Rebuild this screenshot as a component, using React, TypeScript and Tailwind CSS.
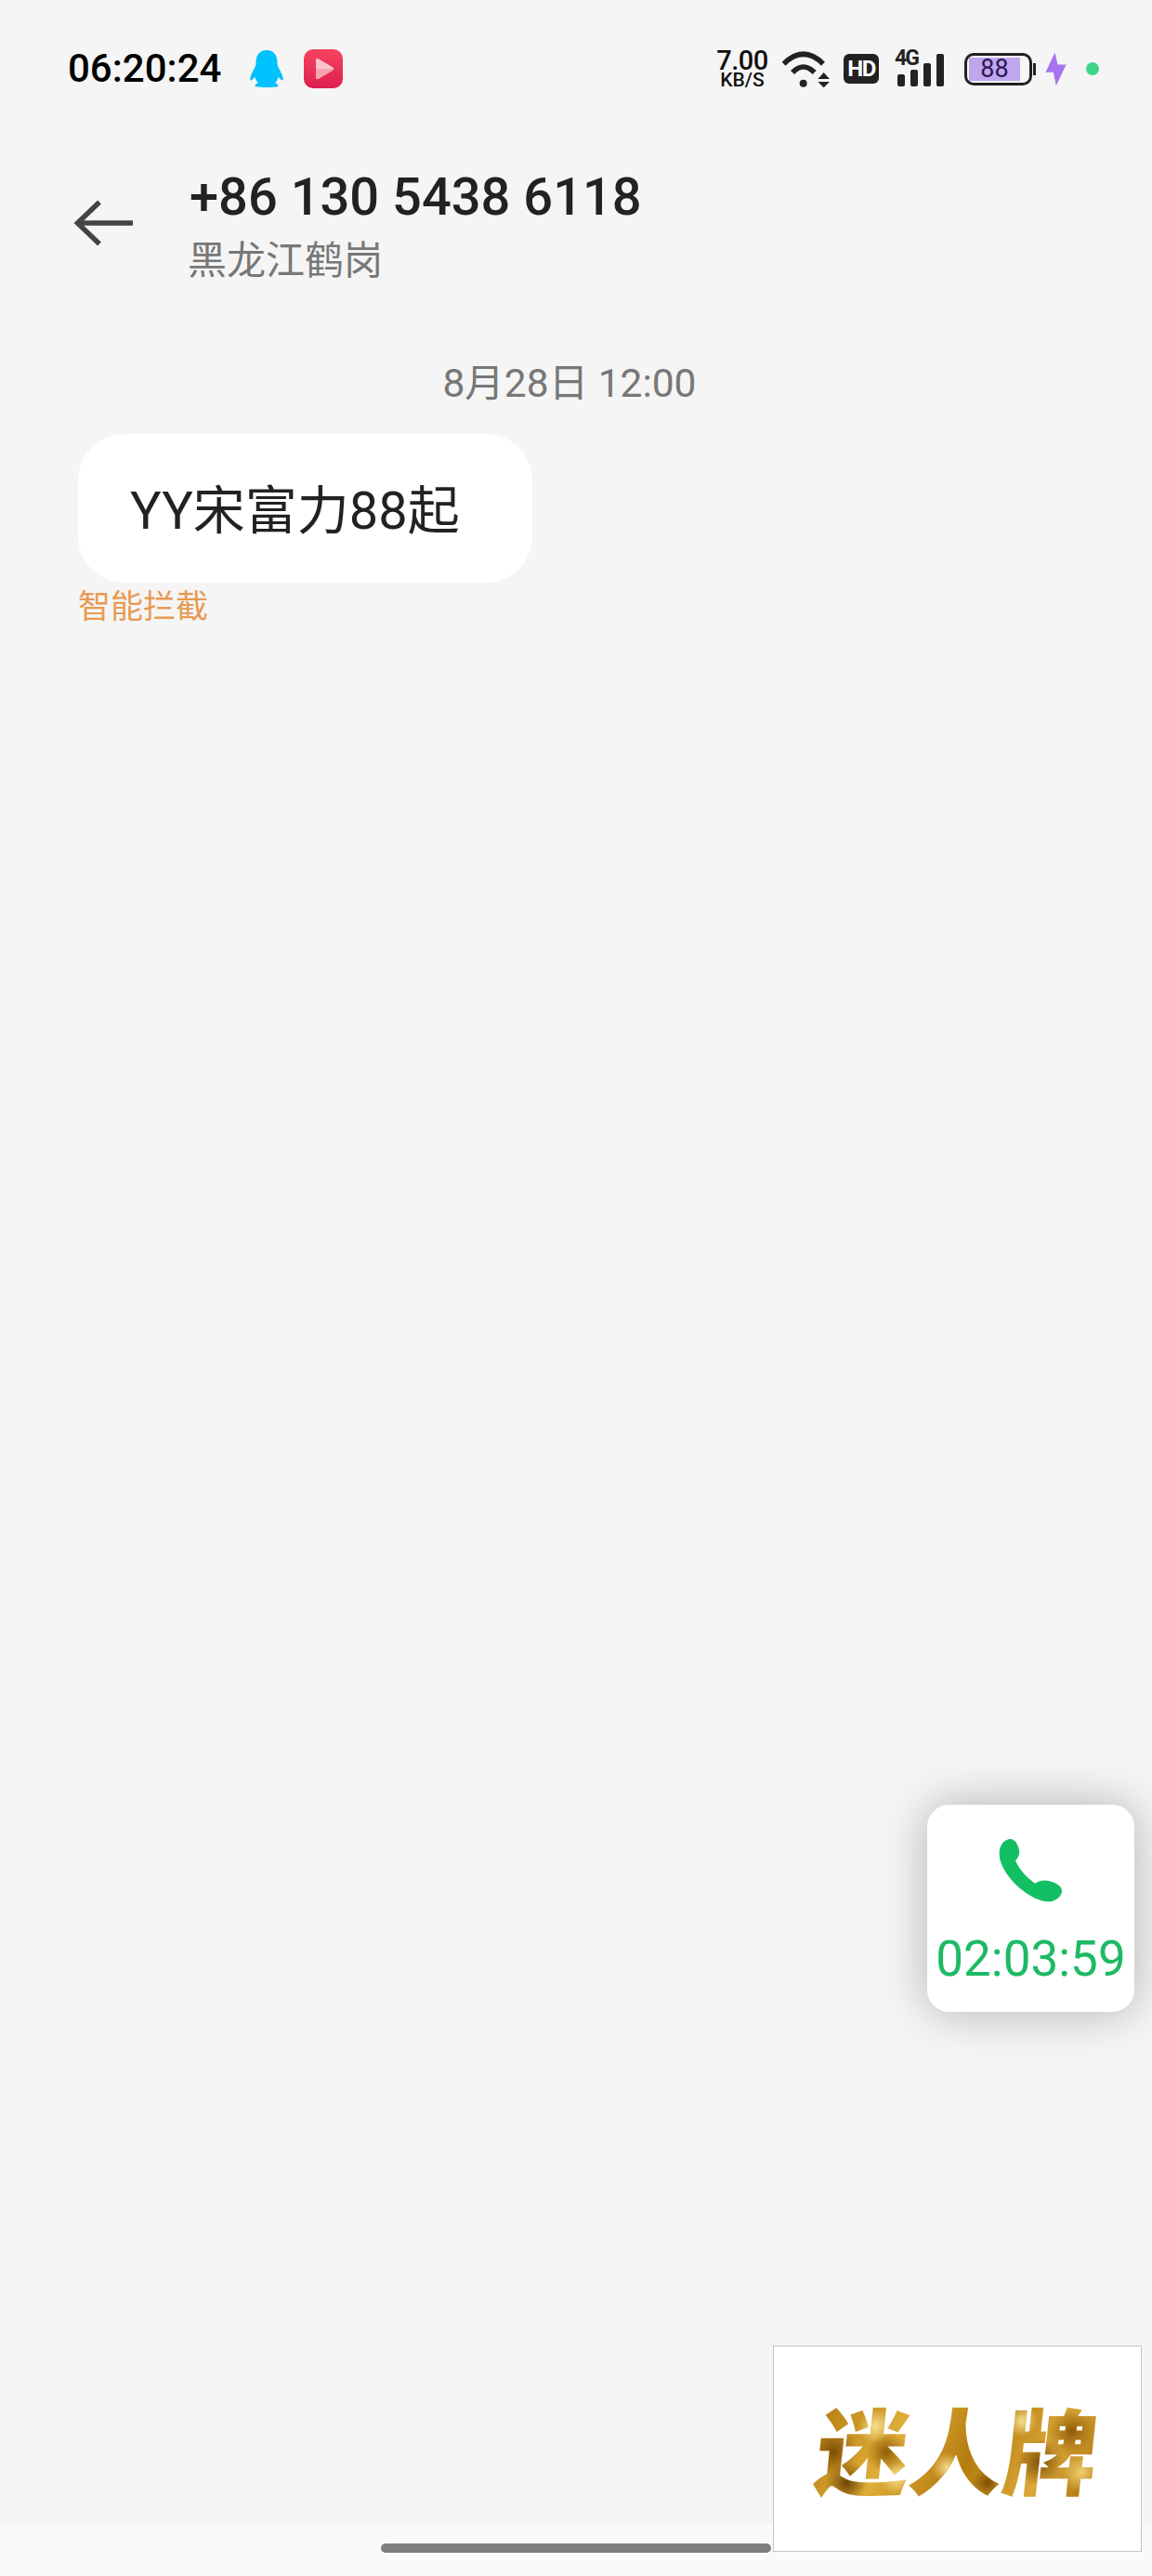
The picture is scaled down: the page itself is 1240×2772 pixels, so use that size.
import React from "react";

const ROBOTO = "font-['Roboto','Noto_Sans_CJK_SC',sans-serif]";

function Penguin() {
  return (
    <svg width="36" height="40" viewBox="0 0 36 40" className="ml-[31px]">
      <path
        fill="#00c2ff"
        d="M18 0C10 0 6.5 6 6.5 13c0 2-.3 3.6-1 5.3C3.2 22.5.6 27 .2 31c-.1 1.4.6 1.8 1.6 1.2 1.2-.7 2.6-2.2 3.4-3.4.8 2.600 2 4.800 3.800 6.500C7.500 36 5.400 37 5.600 38.600 5.800 39.700 8 40 18 40s12.200-.3 12.400-1.400c.2-1.600-1.900-2.600-3.400-3.300 1.800-1.700 3-3.900 3.800-6.500.8 1.200 2.200 2.700 3.400 3.400 1 .6 1.700.2 1.600-1.200-.4-4-3-8.500-5.300-12.700-.7-1.700-1-3.300-1-5.300C29.500 6 26 0 18 0z"
      />
    </svg>
  );
}

function RedApp() {
  return (
    <svg width="42" height="42" viewBox="0 0 42 42" className="ml-[22px]">
      <defs>
        <linearGradient id="redg" x1="0" y1="0" x2="0" y2="1">
          <stop offset="0" stopColor="#f6445f" />
          <stop offset="1" stopColor="#dd1f50" />
        </linearGradient>
      </defs>
      <rect width="42" height="42" rx="10" fill="url(#redg)" />
      <path d="M13 11.500c0-1.300 1.300-2 2.400-1.400l16 9.500c1.100.7 1.100 2.200 0 2.800l-16 9.500c-1.100.6-2.400-.1-2.400-1.400z" fill="#fbc4cf" />
      <path d="M13 21h19.200c0 .6-.3 1.100-.8 1.400l-16 9.500c-1.100.6-2.400-.1-2.400-1.400z" fill="#f7a3b4" />
    </svg>
  );
}

function Wifi() {
  return (
    <svg width="53" height="41" viewBox="278 68 159 123" className="ml-[14px]">
      <path d="M286 112 Q349 50 413 112" fill="none" stroke="#222" strokeWidth="17" />
      <path d="M314 140 Q349 104 385 140" fill="none" stroke="#222" strokeWidth="17" />
      <circle cx="349" cy="175" r="12" fill="#222" />
      <path d="M396 161 L415 140 L434 161 Z" fill="#222" />
      <path d="M396 170 L434 170 L415 189 Z" fill="#222" />
    </svg>
  );
}

function Signal() {
  return (
    <div className="relative ml-[19px] h-[37px] w-[54px]">
      <span className="absolute left-[-2px] top-[-5px] font-['Roboto',sans-serif] text-[23px] font-bold leading-[24px] tracking-[-2px] text-[#222]">
        4G
      </span>
      <svg width="54" height="37" viewBox="0 0 54 37" className="block">
        <rect x="1" y="24" width="8" height="13" rx="2" fill="#222" />
        <rect x="15" y="19" width="8" height="18" rx="2" fill="#222" />
        <rect x="29" y="12" width="8" height="25" rx="2" fill="#222" />
        <rect x="43" y="2" width="8" height="35" rx="2" fill="#222" />
      </svg>
    </div>
  );
}

function Battery() {
  return (
    <div className="ml-[19px] flex items-center">
      <div className="flex h-[35px] w-[73px] items-center rounded-[10px] border-[3px] border-[#222] pl-[2px]">
        <div className="flex h-[25px] w-[55px] items-center justify-center bg-[#c0a6ef] font-['Roboto',sans-serif] text-[27px] leading-none text-[#2a1650]">
          88
        </div>
      </div>
      <div className="ml-[1px] h-[13px] w-[3px] bg-[#222]" />
    </div>
  );
}

function Bolt() {
  return (
    <svg width="23" height="37" viewBox="1127 78 68 110" className="ml-[10px]">
      <path d="M1158 80 L1128 143 L1153 143 L1162 186 L1194 118 L1167 118 Z" fill="#a873ee" />
    </svg>
  );
}

function PhoneGlyph() {
  return (
    <svg width="69" height="69" viewBox="343 204 210 210" className="block">
      <path
        fill="#12bf63"
        d="M375 208C390 203 402 215 408 235 413 250 412 262 398 278 410 305 430 330 462 352 478 342 492 340 510 345 530 350 548 360 550 375 552 392 530 412 505 412 440 410 345 320 345 255 345 230 358 212 375 208Z"
      />
    </svg>
  );
}

export default function App() {
  return (
    <div className={`relative flex h-[2772px] w-[1240px] flex-col overflow-hidden bg-[#f5f5f5] ${ROBOTO}`}>
      {/* status bar */}
      <div className="flex h-[148px] shrink-0 items-center justify-between pl-[73px] pr-[57px]">
        <div className="flex items-center">
          <span className="text-[42px] font-medium leading-none text-black">06:20:24</span>
          <Penguin />
          <RedApp />
        </div>
        <div className="flex items-center">
          <div className="flex w-[56px] flex-col items-center font-['Roboto',sans-serif] text-[#111]">
            <span className="text-[29px] font-medium leading-[24px] tracking-[-0.5px]">7.00</span>
            <span className="text-[21px] font-medium leading-[18px]">KB/S</span>
          </div>
          <Wifi />
          <div className="ml-[14px] flex h-[32px] w-[38px] items-center justify-center rounded-[6px] bg-[#222] font-['Roboto',sans-serif] text-[24px] font-bold leading-none tracking-[-1.5px] text-white">
            HD
          </div>
          <Signal />
          <Battery />
          <Bolt />
          <div className="ml-[21px] h-[14px] w-[14px] rounded-full bg-[#3ed68a]" />
        </div>
      </div>

      {/* header */}
      <div className="flex shrink-0 items-start pl-[79px]">
        <svg width="66" height="50" viewBox="0 0 66 50" className="mt-[67px] shrink-0">
          <path d="M64 25H6M28 2.500L4.500 25 28 47.500" fill="none" stroke="#444" strokeWidth="5.500" />
        </svg>
        <div className="ml-[59px] flex flex-col">
          <span className="mt-[32px] text-[56px] font-medium leading-[64px] text-[#222]">+86 130 5438 6118</span>
          <span className="ml-[-2px] mt-[13px] text-[42px] leading-[48px] text-[#777777]">黑龙江鹤岗</span>
        </div>
      </div>

      {/* thread */}
      <div className="flex justify-center pr-[14px] pt-[84px] text-[42.500px] leading-[48px] text-[#777777]">8月28日 12:00</div>
      <div className="ml-[84px] mt-[30px] flex h-[160px] w-[489px] items-center rounded-[50px] bg-white pl-[56px] pt-[6px] text-[56px] text-[#222]">
        YY宋富力88起
      </div>
      <div className="ml-[84px] mt-[5px] text-[35px] leading-[44px] text-[#e89a53]">智能拦截</div>

      {/* floating call */}
      <div className="absolute left-[998px] top-[1942px] flex h-[223px] w-[223px] flex-col items-center rounded-[24px] bg-white pt-[36px] shadow-[0_0_50px_rgba(0,0,0,0.28)]">
        <PhoneGlyph />
        <span className="mt-[31px] text-[53px] leading-[60px] text-[#1cba64]">02:03:59</span>
      </div>

      {/* bottom bar */}
      <div className="mt-auto flex h-[56px] shrink-0 justify-center bg-[#fafafa] pt-[21px]">
        <div className="h-[10px] w-[420px] rounded-full bg-[#7f7f7f]" />
      </div>

      {/* watermark */}
      <div className="absolute left-[832px] top-[2524px] flex h-[222px] w-[397px] items-center justify-center border border-[#c4c4c4] bg-white pb-[5px]">
        <span className="-skew-x-6 bg-[radial-gradient(circle_at_6%_55%,#7d4f05_0,transparent_9%),radial-gradient(circle_at_12%_85%,#6f4604_0,transparent_8%),radial-gradient(circle_at_20%_30%,#f6e08f_0,transparent_7%),radial-gradient(circle_at_25%_55%,#8f5c06_0,transparent_9%),radial-gradient(circle_at_30%_80%,#f6e08f_0,transparent_8%),radial-gradient(circle_at_42%_30%,#8f5c06_0,transparent_8%),radial-gradient(circle_at_47%_70%,#f3d98a_0,transparent_9%),radial-gradient(circle_at_58%_45%,#f8e7a6_0,transparent_7%),radial-gradient(circle_at_62%_85%,#7d4f05_0,transparent_8%),radial-gradient(circle_at_72%_25%,#f6e08f_0,transparent_7%),radial-gradient(circle_at_80%_65%,#7d4f05_0,transparent_10%),radial-gradient(circle_at_90%_35%,#8f5c06_0,transparent_9%),radial-gradient(circle_at_95%_75%,#f0d070_0,transparent_7%),linear-gradient(115deg,#b57b0e,#dfae3a_30%,#b57b0e_55%,#dba93a_80%,#a9700a)] bg-clip-text font-['Noto_Sans_CJK_SC',sans-serif] text-[101px] font-black leading-[110px] text-transparent">
          迷人牌
        </span>
      </div>
    </div>
  );
}
